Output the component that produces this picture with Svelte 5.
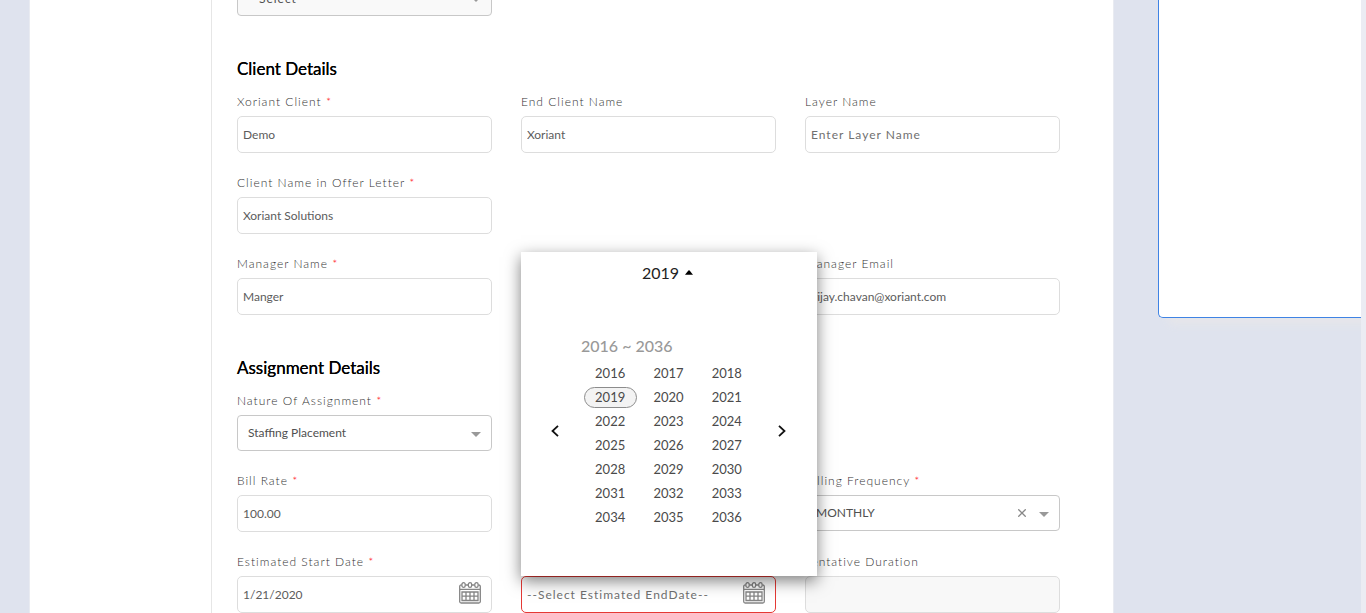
<script>
  const years = Array.from({ length: 21 }, (_, i) => 2016 + i);
  let selectedYear = $state(2019);
  let billing = $state('MONTHLY');
</script>

{#snippet calendarIcon()}
  <svg width="22" height="22" viewBox="0 0 22 22" fill="none" stroke="currentColor" stroke-width="1.3">
    <path d="M2.6 3H2.2Q.7 3 .7 4.500V19.500Q.7 21 2.200 21H19.800Q21.300 21 21.300 19.500V4.500Q21.300 3 19.800 3H19.400M6.400 3H9.200M12.900 3H15.600M.7 7.300H21.300" />
    <rect x="2.900" y=".7" width="3.300" height="4.600" rx="1.600" />
    <rect x="9.350" y=".7" width="3.300" height="4.600" rx="1.600" />
    <rect x="15.800" y=".7" width="3.300" height="4.600" rx="1.600" />
    <path d="M3 10H19V18.500H3ZM3 14.200H19M7 10V18.500M11 10V18.500M15 10V18.500" />
  </svg>
{/snippet}

{#snippet caret()}
  <svg class="caret" width="10" height="5" viewBox="0 0 10 5"><path d="M0 0H10L5 5Z" fill="currentColor" /></svg>
{/snippet}

{#snippet field(id, label, value, required, placeholder)}
  <div class="field">
    <label for={id}>{label}{#if required}<span class="req">&nbsp;*</span>{/if}</label>
    <input {id} type="text" {value} {placeholder} />
  </div>
{/snippet}

<div class="page">
  <main>
    <div class="side"></div>
    <form>
      <div class="row">
        <div class="select lead">
          <select class="empty" aria-label="Select"><option>--Select--</option></select>
          {@render caret()}
        </div>
      </div>

      <h2>Client Details</h2>
      <div class="row">
        {@render field('client', 'Xoriant Client', 'Demo', true, '')}
        {@render field('end-client', 'End Client Name', 'Xoriant', false, '')}
        {@render field('layer', 'Layer Name', '', false, 'Enter Layer Name')}
      </div>
      <div class="row">
        {@render field('offer', 'Client Name in Offer Letter', 'Xoriant Solutions', true, '')}
      </div>
      <div class="row">
        {@render field('manager', 'Manager Name', 'Manger', true, '')}
        <div></div>
        {@render field('email', 'Manager Email', 'vijay.chavan@xoriant.com', false, '')}
      </div>

      <h2>Assignment Details</h2>
      <div class="row">
        <div class="field">
          <label for="nature">Nature Of Assignment<span class="req">&nbsp;*</span></label>
          <div class="select">
            <select id="nature"><option>Staffing Placement</option></select>
            {@render caret()}
          </div>
        </div>
      </div>
      <div class="row">
        {@render field('rate', 'Bill Rate', '100.00', true, '')}
        <div></div>
        <div class="field">
          <label for="billing">Billing Frequency<span class="req">&nbsp;*</span></label>
          <div class="select">
            <select id="billing" bind:value={billing}><option>MONTHLY</option></select>
            <button type="button" class="clear" aria-label="Clear" onclick={() => (billing = '')}>
              <svg width="8" height="8" viewBox="0 0 8 8" stroke="currentColor" stroke-width="1.300"><path d="M.3 .3L7.700 7.700M7.700 .3L.3 7.700" /></svg>
            </button>
            {@render caret()}
          </div>
        </div>
      </div>
      <div class="row">
        <div class="field">
          <label for="start">Estimated Start Date<span class="req">&nbsp;*</span></label>
          <div class="date">
            <input id="start" type="text" value="1/21/2020" />
            <button type="button" class="open" aria-label="Open calendar">{@render calendarIcon()}</button>
          </div>
        </div>
        <div class="field end">
          <div class="date">
            <input type="text" class="invalid" aria-label="Estimated EndDate" placeholder="--Select Estimated EndDate--" />
            <button type="button" class="open" aria-label="Open calendar">{@render calendarIcon()}</button>
            <div class="popup">
              <button type="button" class="current">
                {selectedYear}
                <svg width="8" height="5" viewBox="0 0 8 5"><path d="M0 4.800L3.400 .6Q4 0 4.600 .6L8 4.800Z" fill="#000" /></svg>
              </button>
              <div class="body">
                <button type="button" class="nav" aria-label="Previous years">
                  <svg width="8" height="12" viewBox="0 0 8 12"><path d="M7 .8L1.500 6L7 11.200" /></svg>
                </button>
                <div class="years">
                  <div class="range">2016 ~ 2036</div>
                  <div class="grid">
                    {#each years as year}
                      <button type="button" class:selected={year === selectedYear} onclick={() => (selectedYear = year)}>{year}</button>
                    {/each}
                  </div>
                </div>
                <button type="button" class="nav" aria-label="Next years">
                  <svg width="8" height="12" viewBox="0 0 8 12"><path d="M1 .8L6.500 6L1 11.200" /></svg>
                </button>
              </div>
            </div>
          </div>
        </div>
        <div class="field">
          <label for="duration">Tentative Duration</label>
          <input id="duration" type="text" disabled />
        </div>
      </div>
    </form>
  </main>
  <aside></aside>
  <div class="track"></div>
</div>

<style>
  :global(body) {
    background: #dfe3ee;
  }
  .page,
  .page * {
    box-sizing: border-box;
  }
  .page {
    display: grid;
    grid-template-columns: 1fr 203px 5px;
    height: 100vh;
    padding-left: 29px;
    overflow: hidden;
    font-family: Lato, sans-serif;
    font-size: 12px;
    color: #555;
  }
  main {
    display: flex;
    margin-right: 44px;
    background: #fff;
    border: solid #e9ebf1;
    border-width: 0 1px;
  }
  .side {
    width: 182px;
    border-right: 1px solid #e6e6e6;
  }
  form {
    flex: 1;
    padding: 0 53px 0 25px;
  }
  .row {
    display: grid;
    grid-template-columns: repeat(3, 1fr);
    column-gap: 29px;
    align-items: start;
  }
  .row + .row {
    margin-top: 20px;
  }
  h2 {
    margin: 41px 0 11px;
    font-size: 17px;
    font-weight: 400;
    line-height: 24px;
    color: #000;
    text-shadow: 0 0 0 #000;
  }
  .field {
    display: flex;
    flex-direction: column;
    gap: 4px;
    min-width: 0;
  }
  .end {
    align-self: end;
  }
  label {
    line-height: 20px;
    letter-spacing: 1px;
    font-weight: 300;
    color: #333;
    white-space: nowrap;
  }
  .req {
    color: #ff0d0d;
  }
  button {
    padding: 0;
    border: 0;
    background: none;
    font: inherit;
    color: inherit;
  }
  svg {
    display: block;
  }
  input {
    width: 100%;
    height: 37px;
    padding: 0 5px;
    border: 1px solid #ddd;
    border-radius: 5px;
    background: #fff;
    font: inherit;
    color: #5c5c5c;
  }
  input::placeholder {
    color: #707070;
    letter-spacing: 1px;
    opacity: 1;
  }
  input:disabled {
    background: #f8f8f8;
  }
  .invalid {
    border-color: #e53935;
  }
  .select,
  .date {
    position: relative;
  }
  .lead {
    margin-top: -20px;
  }
  select {
    display: block;
    width: 100%;
    height: 36px;
    padding: 0 30px 2px 10px;
    border: 1px solid #c8c8c8;
    border-radius: 4px;
    background: #fff;
    appearance: none;
    font: inherit;
    color: #505050;
  }
  .empty {
    padding-bottom: 0;
    background: #f9f9f9;
    letter-spacing: 1px;
  }
  .caret {
    position: absolute;
    right: 11px;
    top: 17px;
    color: #999;
  }
  .clear {
    position: absolute;
    right: 34px;
    top: 14px;
    color: #888;
  }
  .open {
    position: absolute;
    right: 11px;
    top: 6px;
    color: #858585;
  }
  .popup {
    position: absolute;
    left: 0;
    bottom: 100%;
    z-index: 1;
    width: 296px;
    height: 324px;
    background: #fff;
    box-shadow: 0 5px 15px rgba(0, 0, 0, 0.5);
  }
  .current {
    display: flex;
    align-items: center;
    justify-content: center;
    gap: 6px;
    width: 100%;
    height: 42px;
    padding: 0 3px 1px 0;
    font-size: 16px;
    color: #222;
  }
  .body {
    display: flex;
    align-items: center;
    gap: 18px;
    padding: 40px 27px 0 26px;
  }
  .nav {
    display: grid;
    place-items: center;
    width: 16px;
    height: 24px;
    padding-bottom: 2px;
  }
  .nav path {
    fill: none;
    stroke: #111;
    stroke-width: 1.8;
  }
  .years {
    flex: 1;
  }
  .range {
    margin-bottom: 3px;
    font-size: 16px;
    font-weight: 500;
    line-height: 24px;
    color: #999;
  }
  .grid {
    display: grid;
    grid-template-columns: repeat(3, 1fr);
    grid-auto-rows: 24px;
    place-items: center;
  }
  .grid button {
    width: 53px;
    height: 21px;
    border: 1px solid transparent;
    border-radius: 11px;
    font-size: 13px;
    line-height: 19px;
    color: #4a4a4a;
  }
  .grid .selected {
    border-color: #8c8c8c;
    background: #f3f3f3;
  }
  aside {
    height: 318px;
    border: solid #3f83e4;
    border-width: 0 0 1px 1px;
    border-radius: 0 0 0 5px;
    background: #fff;
    box-shadow: 10px 7px 8px #e6e6ea;
  }
  .track {
    z-index: 1;
    background: #ebecf3;
  }
</style>
